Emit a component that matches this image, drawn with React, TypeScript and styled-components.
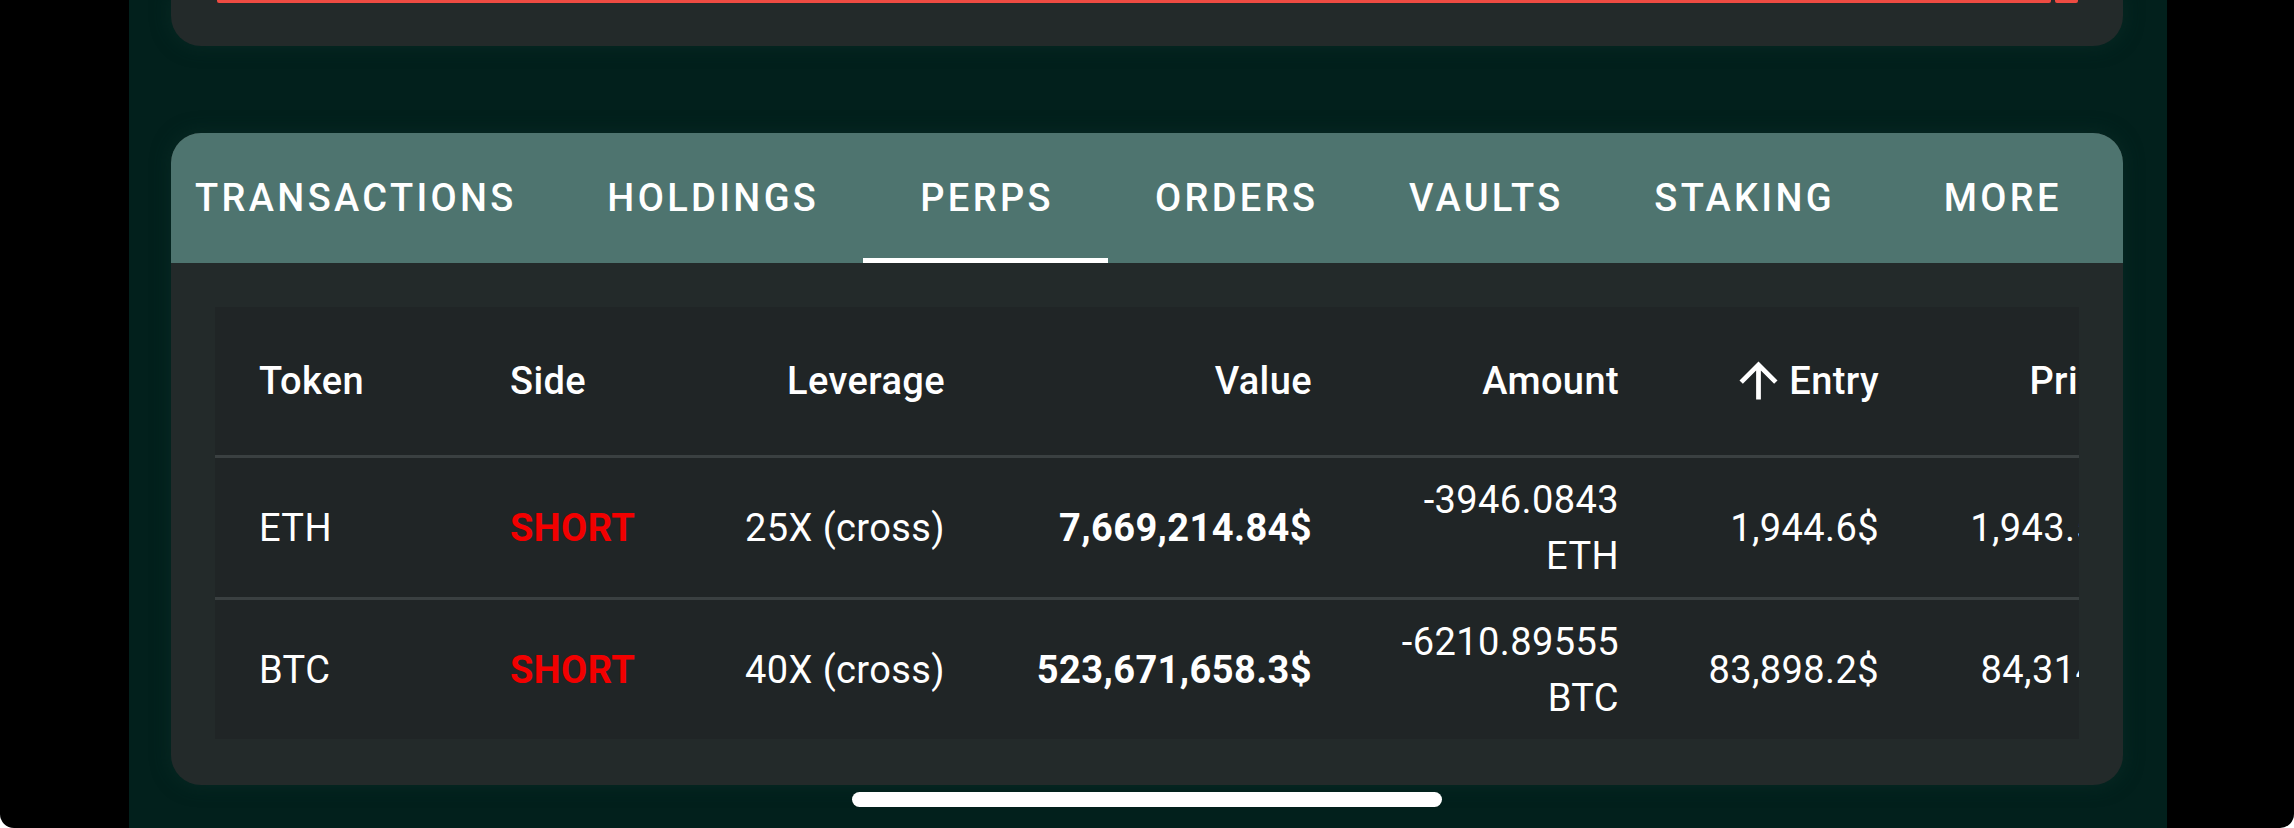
import React from "react";
import styled, { createGlobalStyle } from "styled-components";

const GlobalStyle = createGlobalStyle`
  html, body {
    margin: 0;
    padding: 0;
    background: #ffffff;
  }
  body {
    font-family: Roboto, "Noto Sans", "Liberation Sans", sans-serif;
    -webkit-font-smoothing: antialiased;
  }
  *, *::before, *::after {
    box-sizing: border-box;
  }
`;

const Screen = styled.div`
  position: relative;
  width: 2294px;
  height: 828px;
  padding-left: 129px;
  background: #000000;
  border-radius: 0 0 14px 14px;
  overflow: hidden;
  display: flex;
`;

const AppColumn = styled.main`
  width: 2038px;
  height: 100%;
  background: #02201c;
  padding: 0 44px 0 42px;
  display: flex;
  flex-direction: column;
  gap: 87px;
`;

const SummaryCard = styled.section`
  height: 46px;
  padding: 0 45px 0 46px;
  background: #232a2a;
  border-radius: 0 0 30px 30px;
  box-shadow: 0 0 16px 4px rgba(10, 44, 38, 0.55);
  display: flex;
  gap: 4px;
  align-items: flex-start;
`;

const RiskBar = styled.div<{ $grow?: boolean }>`
  height: 3px;
  flex: ${(p) => (p.$grow ? "1 1 auto" : "0 0 23px")};
  background: #ee4b42;
  border-radius: 0 0 2px 2px;
`;

const PortfolioCard = styled.section`
  height: 652px;
  background: #232a2a;
  border-radius: 30px;
  overflow: hidden;
  box-shadow: 0 0 16px 4px rgba(10, 44, 38, 0.55);
  display: flex;
  flex-direction: column;
`;

const TabBar = styled.nav`
  flex: 0 0 130px;
  background: #4e746f;
  overflow: hidden;
`;

const TabList = styled.div`
  height: 100%;
  margin-left: -23px;
  display: flex;
`;

/* letter-spacing leaves a trailing gap after the last glyph, so the right
   padding is trimmed by that amount to keep the label optically centred */
const Tab = styled.button<{ $active?: boolean }>`
  position: relative;
  flex: 0 0 auto;
  min-width: 245px;
  height: 100%;
  padding: 0 43.65px 0 47px;
  border: 0;
  background: transparent;
  color: #ffffff;
  font-family: Roboto, "Noto Sans", sans-serif;
  font-weight: 500;
  font-size: 38px;
  letter-spacing: 3.35px;
  text-transform: uppercase;
  white-space: nowrap;
  display: flex;
  align-items: center;
  justify-content: center;
  cursor: pointer;

  &::after {
    content: "";
    position: absolute;
    left: 0;
    right: 0;
    bottom: 0;
    height: 5px;
    background: #ffffff;
    display: ${(p) => (p.$active ? "block" : "none")};
  }
`;

const TabPanel = styled.div`
  flex: 1 1 auto;
  padding: 44px;
`;

const TableWrap = styled.div`
  background: #202526;
  overflow: hidden;
`;

const Table = styled.table`
  width: 1948px;
  table-layout: fixed;
  border-collapse: collapse;
  color: #ffffff;
  font-family: Roboto, "Noto Sans", sans-serif;
  letter-spacing: 0.4px;
`;

const HeadCell = styled.th<{ $align: "left" | "right" }>`
  height: 149px;
  padding: 0 44px;
  line-height: 56px;
  font-size: 38px;
  font-weight: 500;
  text-align: ${(p) => p.$align};
  vertical-align: middle;
  white-space: nowrap;
  border-bottom: 3px solid #3a4041;
`;

const BodyRow = styled.tr`
  &:last-child td {
    border-bottom: 0;
  }
`;

const BodyCell = styled.td<{ $align: "left" | "right"; $strong?: boolean; $side?: boolean }>`
  padding: 14px 44px 13px;
  line-height: 56px;
  font-size: 38px;
  font-weight: ${(p) => (p.$strong || p.$side ? 700 : 400)};
  color: ${(p) => (p.$side ? "#f20000" : "#ffffff")};
  text-align: ${(p) => p.$align};
  vertical-align: middle;
  white-space: ${(p) => (p.$align === "right" ? "normal" : "nowrap")};
  overflow: hidden;
  border-bottom: 3px solid #3a4041;
`;

const SortLabel = styled.span`
  display: inline-flex;
  align-items: center;
  gap: 2px;
  height: 56px;
  vertical-align: top;
`;

const SortIcon = styled.svg`
  width: 57px;
  height: 57px;
  flex: 0 0 57px;
  margin: -1px 0;
  fill: #ffffff;
`;

const HomeIndicator = styled.div`
  position: absolute;
  left: 50%;
  bottom: 21px;
  width: 590px;
  height: 15px;
  margin-left: -295px;
  border-radius: 8px;
  background: #ffffff;
`;

type Column = {
  key: string;
  label: string;
  align: "left" | "right";
  width: number;
  sorted?: boolean;
};

const columns: Column[] = [
  { key: "token", label: "Token", align: "left", width: 251 },
  { key: "side", label: "Side", align: "left", width: 230 },
  { key: "leverage", label: "Leverage", align: "right", width: 293 },
  { key: "value", label: "Value", align: "right", width: 367 },
  { key: "amount", label: "Amount", align: "right", width: 307 },
  { key: "entry", label: "Entry", align: "right", width: 260, sorted: true },
  { key: "price", label: "Price", align: "right", width: 240 },
];

type Position = {
  token: string;
  side: string;
  leverage: string;
  value: string;
  amount: string;
  entry: string;
  price: string;
};

const positions: Position[] = [
  {
    token: "ETH",
    side: "SHORT",
    leverage: "25X (cross)",
    value: "7,669,214.84$",
    amount: "-3946.0843 ETH",
    entry: "1,944.6$",
    price: "1,943.5$",
  },
  {
    token: "BTC",
    side: "SHORT",
    leverage: "40X (cross)",
    value: "523,671,658.3$",
    amount: "-6210.89555 BTC",
    entry: "83,898.2$",
    price: "84,314$",
  },
];

const tabs = ["Transactions", "Holdings", "Perps", "Orders", "Vaults", "Staking", "More"];

function ArrowUp() {
  return (
    <SortIcon viewBox="0 0 24 24" aria-hidden="true">
      <path d="M4 12l1.41 1.41L11 7.83V20h2V7.83l5.58 5.59L20 12l-8-8-8 8z" />
    </SortIcon>
  );
}

export default function App() {
  return (
    <>
      <GlobalStyle />
      <Screen>
        <AppColumn>
          <SummaryCard>
            <RiskBar $grow />
            <RiskBar />
          </SummaryCard>

          <PortfolioCard>
            <TabBar>
              <TabList>
                {tabs.map((t) => (
                  <Tab key={t} $active={t === "Perps"}>
                    {t}
                  </Tab>
                ))}
              </TabList>
            </TabBar>

            <TabPanel>
              <TableWrap>
                <Table>
                  <colgroup>
                    {columns.map((c) => (
                      <col key={c.key} style={{ width: c.width }} />
                    ))}
                  </colgroup>
                  <thead>
                    <tr>
                      {columns.map((c) => (
                        <HeadCell key={c.key} $align={c.align}>
                          {c.sorted ? (
                            <SortLabel>
                              <ArrowUp />
                              {c.label}
                            </SortLabel>
                          ) : (
                            c.label
                          )}
                        </HeadCell>
                      ))}
                    </tr>
                  </thead>
                  <tbody>
                    {positions.map((p) => (
                      <BodyRow key={p.token}>
                        <BodyCell $align="left">{p.token}</BodyCell>
                        <BodyCell $align="left" $side>
                          {p.side}
                        </BodyCell>
                        <BodyCell $align="right">{p.leverage}</BodyCell>
                        <BodyCell $align="right" $strong>
                          {p.value}
                        </BodyCell>
                        <BodyCell $align="right">{p.amount}</BodyCell>
                        <BodyCell $align="right">{p.entry}</BodyCell>
                        <BodyCell $align="right">{p.price}</BodyCell>
                      </BodyRow>
                    ))}
                  </tbody>
                </Table>
              </TableWrap>
            </TabPanel>
          </PortfolioCard>
        </AppColumn>
        <HomeIndicator />
      </Screen>
    </>
  );
}
